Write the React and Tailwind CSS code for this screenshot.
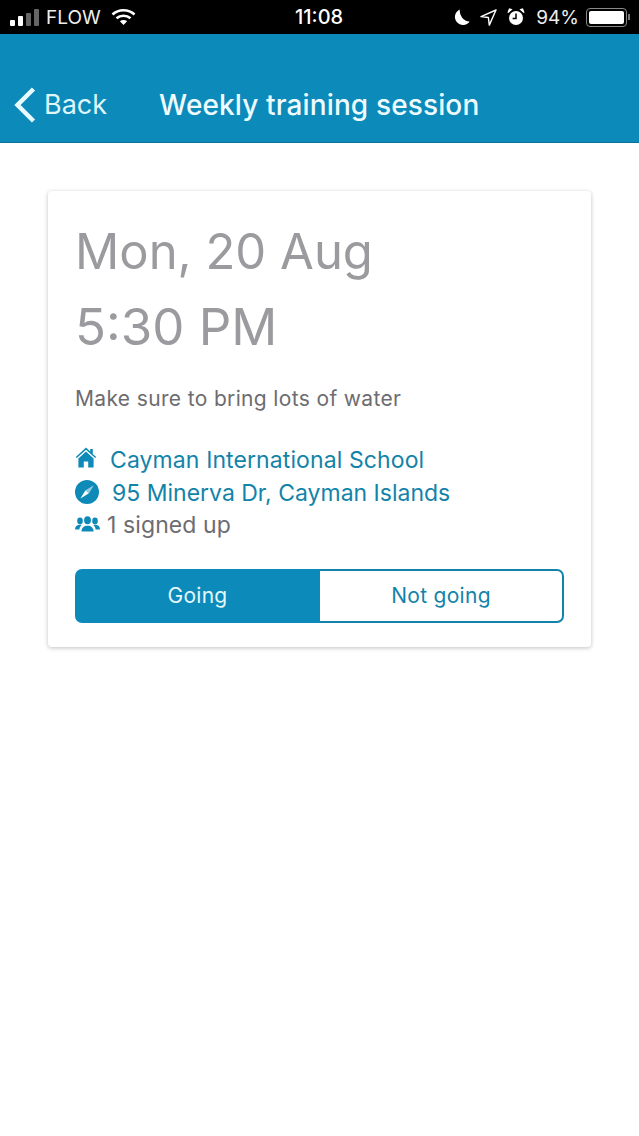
const F = { fontFamily: 'Inter, "Noto Sans", sans-serif' };

function Wifi() {
  return (
    <svg width="25" height="18" viewBox="0 0 25 18" fill="none" stroke="#fff" strokeWidth="2.6" strokeLinecap="butt">
      <path d="M1.5 6.5C7.5 .8 17.5 .8 23.5 6.5" />
      <path d="M5.5 10.3C9.5 6.8 15.5 6.8 19.5 10.3" />
      <path d="M12.5 17l-3.6-3.7c2-1.6 5.2-1.6 7.2 0z" fill="#fff" stroke="none" />
    </svg>
  );
}

function Moon() {
  return (
    <svg width="16" height="17" viewBox="0 0 16 17" fill="#fff">
      <path d="M5.8.6A8 8 0 1 0 15.6 12.4 10.5 10.5 0 0 1 5.8.6z" />
    </svg>
  );
}

function Arrow() {
  return (
    <svg width="17" height="17" viewBox="0 0 17 17" fill="none" stroke="#fff" strokeWidth="1.4" strokeLinejoin="round">
      <path d="M16 1 1 7.6l7.4.9.9 7.6z" />
    </svg>
  );
}

function Alarm() {
  return (
    <svg width="18" height="18" viewBox="0 0 18 18" fill="#fff">
      <circle cx="9" cy="10" r="7" />
      <path d="M1 4.6 4.4 1.6 2.4 1zM17 4.6 13.6 1.6 15.6 1z" stroke="#fff" strokeWidth="1.2" />
      <path d="M9 5.6V10.4H5.6" fill="none" stroke="#000" strokeWidth="1.5" />
    </svg>
  );
}

function Home() {
  return (
    <svg width="22" height="21" viewBox="0 0 22 21" fill="#0e8ab8" className="mb-[5px]">
      <path d="M11 .6.8 10l1 1.1L11 2.8l9.2 8.3 1-1.1-3.4-3.1V2h-2.6v2.6z" />
      <path d="M11 4.6 3.4 11.4V20.4h5.4v-6h4.4v6h5.4v-9z" />
    </svg>
  );
}

function Compass() {
  return (
    <svg width="24" height="24" viewBox="0 0 24 24" className="mb-[2px]">
      <circle cx="12" cy="12" r="12" fill="#0e8ab8" />
      <path d="M18.6 5.4 10.4 10.4 5.4 18.6 13.6 13.6z" fill="#fff" />
      <path d="M10.4 10.4 13.6 13.6 18.6 5.4z" fill="#0e8ab8" opacity=".45" />
    </svg>
  );
}

function People() {
  return (
    <svg width="25" height="16" viewBox="0 0 25 16" fill="#0e8ab8" className="mb-[3px]">
      <ellipse cx="12.5" cy="4.2" rx="3.4" ry="4" />
      <path d="M6.4 15.6c0-3.4 2.4-5.4 4.2-5.9h3.8c1.8.5 4.2 2.5 4.2 5.9z" />
      <ellipse cx="5" cy="5" rx="2.8" ry="3.4" />
      <path d="M0 13.4c0-2.6 1.6-4 3.2-4.4h3.4c-1.3 1.2-2 2.6-2.2 4.4z" />
      <ellipse cx="20" cy="5" rx="2.8" ry="3.4" />
      <path d="M25 13.4c0-2.6-1.6-4-3.2-4.4h-3.4c1.3 1.2 2 2.6 2.2 4.4z" />
    </svg>
  );
}

export default function App() {
  return (
    <div style={F} className="w-[639px] h-[1136px] bg-white flex flex-col overflow-hidden">
      <div className="h-[34px] bg-black text-white flex items-center justify-between shrink-0 pl-[10px] pr-[9px] relative">
        <div className="flex items-center">
          <div className="flex items-end gap-[3px] h-[17px]">
            <span className="w-[5px] h-[6px] bg-white rounded-[1px]" />
            <span className="w-[5px] h-[10px] bg-white rounded-[1px]" />
            <span className="w-[5px] h-[13px] bg-[#666] rounded-[1px]" />
            <span className="w-[5px] h-[17px] bg-[#666] rounded-[1px]" />
          </div>
          <span className="ml-[7px] text-[19px] leading-none text-[#eee]">FLOW</span>
          <span className="ml-[10px] flex"><Wifi /></span>
        </div>
        <span className="absolute left-[295px] text-[20px] font-medium leading-none">11:08</span>
        <div className="flex items-center">
          <Moon />
          <span className="ml-[10px] flex"><Arrow /></span>
          <span className="ml-[10px] flex"><Alarm /></span>
          <span className="ml-[11px] text-[19px] leading-none text-[#eee]">94%</span>
          <div className="ml-[7px] w-[41px] h-[19px] border border-[#888] rounded-[4px] p-[2px] flex">
            <div className="flex-1 bg-white rounded-[2px]" />
          </div>
          <div className="w-[2px] h-[6px] bg-[#777] ml-[1px]" />
        </div>
      </div>

      <div className="h-[109px] bg-[#0c8aba] border-b border-[#0b7398] shrink-0 flex items-center pt-[33px] text-white">
        <svg className="ml-[14px]" width="22" height="36" viewBox="0 0 22 36" fill="none" stroke="#e8fbff" strokeWidth="4.5">
          <path d="M19.5 2 3.5 18l16 16" />
        </svg>
        <span className="ml-[8px] text-[27px] leading-none text-[#dff6fb]">Back</span>
        <span className="ml-[52px] text-[28px] tracking-[0.13px] leading-none font-medium text-[#eefcff]">Weekly training session</span>
      </div>

      <div className="pl-[48px] pt-[48px]">
        <div className="w-[543px] h-[456px] bg-white rounded-[4px] shadow-[0_1px_4px_rgba(0,0,0,0.25)] px-[27px] pt-[23px]">
          <div className="text-[49px] leading-[75px] text-[#9b9a9e]">Mon, 20 Aug</div>
          <div className="text-[51px] leading-[75px] text-[#9b9a9e]">5:30 PM</div>
          <div className="mt-[19px] text-[21px] tracking-[0.35px] leading-[32px] text-[#6d6c70]">Make sure to bring lots of water</div>
          <div className="mt-[29px] flex flex-col text-[23px] leading-[32.5px]">
            <div className="flex items-center text-[#1383a9] tracking-[0.1px]">
              <Home />
              <span className="ml-[13px]">Cayman International School</span>
            </div>
            <div className="flex items-center text-[#1383a9]">
              <Compass />
              <span className="ml-[13px]">95 Minerva Dr, Cayman Islands</span>
            </div>
            <div className="flex items-center text-[#6d6c70] tracking-[0.1px]">
              <People />
              <span className="ml-[7px]">1 signed up</span>
            </div>
          </div>
          <div className="mt-[27px] flex h-[54px] w-[489px] text-[21px] tracking-[0.3px]">
            <div className="w-[245px] bg-[#0c8aba] rounded-l-[7px] flex items-center justify-center text-[#e4f8fc]">Going</div>
            <div className="flex-1 border-2 border-l-0 border-[#1383a9] rounded-r-[7px] flex items-center justify-center text-[#1383a9]">Not going</div>
          </div>
        </div>
      </div>
    </div>
  );
}
